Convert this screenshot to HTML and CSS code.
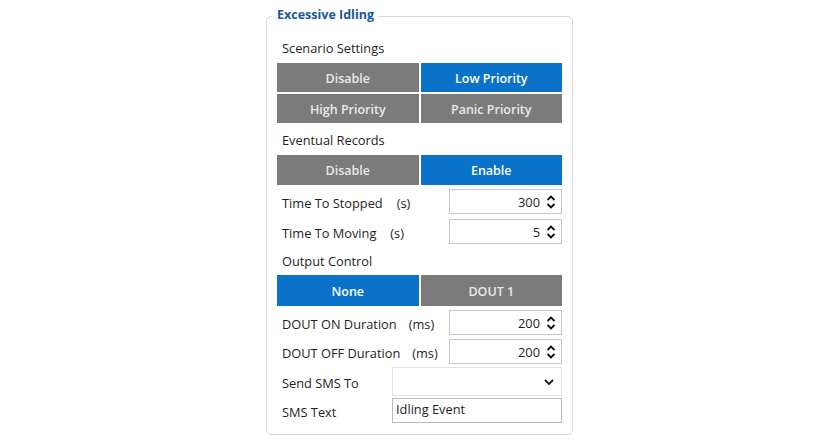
FILE: index.html
```html
<!DOCTYPE html>
<html>
<head>
<meta charset="utf-8">
<link rel="stylesheet" href="styles.css">
</head>
<body>
<div class="page">
  <div class="panel">
    <div class="panel-title">Excessive Idling</div>
    <div class="section-label first">Scenario Settings</div>
    <div class="btn-grid">
      <div class="btn">Disable</div>
      <div class="btn active">Low Priority</div>
      <div class="btn">High Priority</div>
      <div class="btn">Panic Priority</div>
    </div>
    <div class="section-label">Eventual Records</div>
    <div class="btn-grid tall">
      <div class="btn">Disable</div>
      <div class="btn active">Enable</div>
    </div>
    <div class="field-row r1">
      <div class="label">Time To Stopped<span class="unit u-s1">(s)</span></div>
      <div class="spin"><span class="val">300</span><svg class="arrows" viewBox="0 0 10 16"><path d="M1.5 6 L5 2.5 L8.5 6" /><path d="M1.5 10 L5 13.5 L8.5 10" /></svg></div>
    </div>
    <div class="field-row r2">
      <div class="label">Time To Moving<span class="unit u-s2">(s)</span></div>
      <div class="spin"><span class="val">5</span><svg class="arrows" viewBox="0 0 10 16"><path d="M1.5 6 L5 2.5 L8.5 6" /><path d="M1.5 10 L5 13.5 L8.5 10" /></svg></div>
    </div>
    <div class="section-label oc">Output Control</div>
    <div class="btn-grid taller">
      <div class="btn active">None</div>
      <div class="btn">DOUT 1</div>
    </div>
    <div class="field-row r3">
      <div class="label">DOUT ON Duration<span class="unit u-ms1">(ms)</span></div>
      <div class="spin"><span class="val">200</span><svg class="arrows" viewBox="0 0 10 16"><path d="M1.5 6 L5 2.5 L8.5 6" /><path d="M1.5 10 L5 13.5 L8.5 10" /></svg></div>
    </div>
    <div class="field-row r3">
      <div class="label">DOUT OFF Duration<span class="unit u-ms2">(ms)</span></div>
      <div class="spin"><span class="val">200</span><svg class="arrows" viewBox="0 0 10 16"><path d="M1.5 6 L5 2.5 L8.5 6" /><path d="M1.5 10 L5 13.5 L8.5 10" /></svg></div>
    </div>
    <div class="field-row r-select">
      <div class="label">Send SMS To</div>
      <div class="select"><svg class="chev" viewBox="0 0 10 8"><path d="M1 2 L5 6 L9 2" /></svg></div>
    </div>
    <div class="field-row r-text">
      <div class="label">SMS Text</div>
      <div class="textbox">Idling Event</div>
    </div>
  </div>
</div>
</body>
</html>
```

FILE: styles.css
```css
html, body {
  margin: 0;
  padding: 0;
  background: #ffffff;
}
body {
  font-family: "Open Sans", "Noto Sans", sans-serif;
  font-size: 12.8px;
  color: #1e1e1e;
}
.page {
  width: 840px;
  height: 448px;
  display: flex;
  justify-content: flex-start;
}
.panel {
  position: relative;
  align-self: flex-start;
  margin-left: 266px;
  margin-top: 16px;
  width: 285px;
  border: 1px solid #d3dae2;
  border-radius: 5px;
  padding: 21px 10px 11px 10px;
  display: flex;
  flex-direction: column;
}
.panel-title {
  position: absolute;
  left: 5px;
  top: -12px;
  padding: 0 5px;
  background: #ffffff;
  color: #17589a;
  font-weight: 700;
  font-size: 12.5px;
  line-height: 20px;
}
.section-label {
  height: 20px;
  line-height: 21px;
  padding-left: 5px;
  margin-top: 7px;
  margin-bottom: 5px;
}
.section-label.first {
  margin-top: 0;
}
.section-label.oc {
  margin-top: 7px;
  margin-bottom: 4px;
}
.btn-grid {
  display: grid;
  grid-template-columns: 1fr 1fr;
  grid-auto-rows: 29px;
  gap: 2px;
}
.btn-grid.tall {
  grid-auto-rows: 30px;
}
.btn-grid.taller {
  grid-auto-rows: 31px;
}
.btn {
  background: #7b7b7b;
  color: #e9e9e9;
  font-weight: 600;
  font-size: 12.5px;
  display: flex;
  align-items: center;
  justify-content: center;
  padding-top: 1px;
}
.btn.active {
  background: #0a72c8;
  color: #ffffff;
}
.field-row {
  display: flex;
  justify-content: space-between;
  align-items: center;
  height: 25px;
}
.r1 { margin-top: 4px; }
.r2 { margin-top: 5px; }
.r3 { margin-top: 4px; }
.r-select { margin-top: 3px; height: 29px; }
.r-text { margin-top: 2px; height: 25px; }
.label {
  padding-left: 5px;
  padding-top: 2px;
  white-space: nowrap;
}
.unit { display: inline-block; }
.u-s1 { margin-left: 14px; }
.u-s2 { margin-left: 14px; }
.u-ms1 { margin-left: 12px; }
.u-ms2 { margin-left: 12px; }
.spin {
  box-sizing: border-box;
  width: 113px;
  height: 25px;
  border: 1px solid #c6c6c6;
  display: flex;
  align-items: center;
  justify-content: flex-end;
  padding-right: 5px;
}
.val {
  margin-right: 6px;
  padding-top: 1px;
}
.arrows {
  width: 10px;
  height: 16px;
  fill: none;
  stroke: #111;
  stroke-width: 1.8;
}
.select {
  box-sizing: border-box;
  width: 170px;
  height: 29px;
  border: 1px solid #e4e4e4;
  display: flex;
  align-items: center;
  justify-content: flex-end;
  padding-right: 7px;
}
.chev {
  width: 10px;
  height: 8px;
  fill: none;
  stroke: #111;
  stroke-width: 1.8;
}
.textbox {
  box-sizing: border-box;
  width: 170px;
  height: 25px;
  border: 1px solid #b9b9b9;
  padding-left: 3px;
  line-height: 21px;
}
```
